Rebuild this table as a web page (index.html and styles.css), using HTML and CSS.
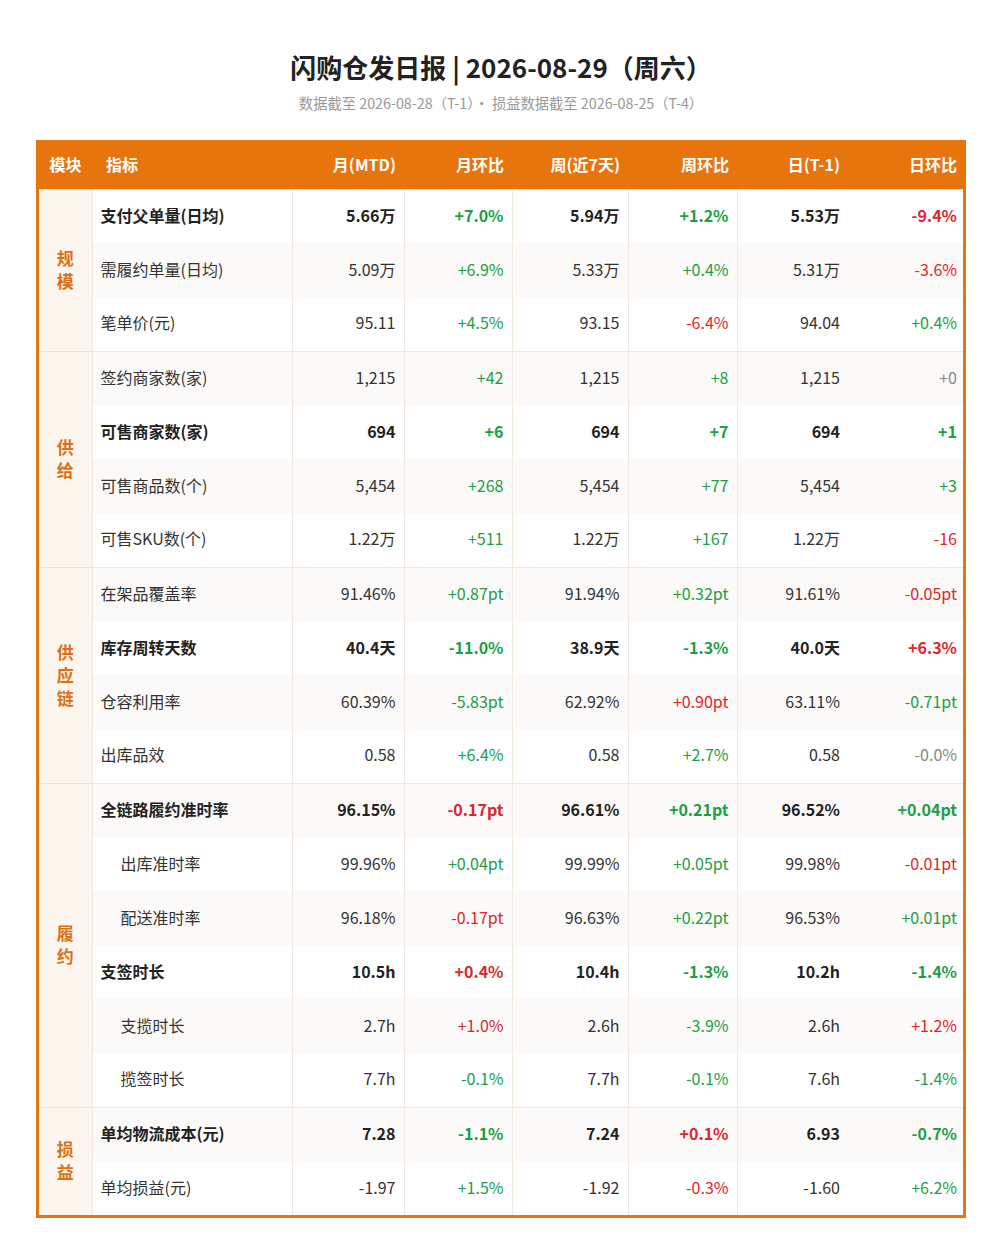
FILE: index.html
```html
<!DOCTYPE html>
<html lang="zh-CN">
<head>
<meta charset="utf-8">
<title>闪购仓发日报</title>
<link rel="stylesheet" href="styles.css">
</head>
<body>
<div class="page">
  <h1 class="title">闪购仓发日报 | 2026-08-29（周六）</h1>
  <p class="subtitle">数据截至 2026-08-28（T-1）· 损益数据截至 2026-08-25（T-4）</p>
  <div class="frame">
    <table class="report">
      <colgroup>
        <col class="c-mod"><col class="c-name"><col class="c-m"><col class="c-mc"><col class="c-w"><col class="c-wc"><col class="c-d"><col class="c-dc">
      </colgroup>
      <thead>
        <tr>
          <th class="h-mod">模块</th>
          <th class="h-name">指标</th>
          <th class="num">月(MTD)</th>
          <th class="num">月环比</th>
          <th class="num">周(近7天)</th>
          <th class="num">周环比</th>
          <th class="num">日(T-1)</th>
          <th class="num last">日环比</th>
        </tr>
      </thead>
      <tbody>
        <tr class="grp bold">
          <td class="mod" rowspan="3"><span>规</span><span>模</span></td>
          <td class="name">支付父单量(日均)</td>
          <td class="num">5.66万</td><td class="num g">+7.0%</td>
          <td class="num">5.94万</td><td class="num g">+1.2%</td>
          <td class="num">5.53万</td><td class="num last r">-9.4%</td>
        </tr>
        <tr>
          <td class="name">需履约单量(日均)</td>
          <td class="num">5.09万</td><td class="num g">+6.9%</td>
          <td class="num">5.33万</td><td class="num g">+0.4%</td>
          <td class="num">5.31万</td><td class="num last r">-3.6%</td>
        </tr>
        <tr>
          <td class="name">笔单价(元)</td>
          <td class="num">95.11</td><td class="num g">+4.5%</td>
          <td class="num">93.15</td><td class="num r">-6.4%</td>
          <td class="num">94.04</td><td class="num last g">+0.4%</td>
        </tr>

        <tr class="grp">
          <td class="mod" rowspan="4"><span>供</span><span>给</span></td>
          <td class="name">签约商家数(家)</td>
          <td class="num">1,215</td><td class="num g">+42</td>
          <td class="num">1,215</td><td class="num g">+8</td>
          <td class="num">1,215</td><td class="num last n">+0</td>
        </tr>
        <tr class="bold">
          <td class="name">可售商家数(家)</td>
          <td class="num">694</td><td class="num g">+6</td>
          <td class="num">694</td><td class="num g">+7</td>
          <td class="num">694</td><td class="num last g">+1</td>
        </tr>
        <tr>
          <td class="name">可售商品数(个)</td>
          <td class="num">5,454</td><td class="num g">+268</td>
          <td class="num">5,454</td><td class="num g">+77</td>
          <td class="num">5,454</td><td class="num last g">+3</td>
        </tr>
        <tr>
          <td class="name">可售SKU数(个)</td>
          <td class="num">1.22万</td><td class="num g">+511</td>
          <td class="num">1.22万</td><td class="num g">+167</td>
          <td class="num">1.22万</td><td class="num last r">-16</td>
        </tr>

        <tr class="grp">
          <td class="mod" rowspan="4"><span>供</span><span>应</span><span>链</span></td>
          <td class="name">在架品覆盖率</td>
          <td class="num">91.46%</td><td class="num g">+0.87pt</td>
          <td class="num">91.94%</td><td class="num g">+0.32pt</td>
          <td class="num">91.61%</td><td class="num last r">-0.05pt</td>
        </tr>
        <tr class="bold">
          <td class="name">库存周转天数</td>
          <td class="num">40.4天</td><td class="num g">-11.0%</td>
          <td class="num">38.9天</td><td class="num g">-1.3%</td>
          <td class="num">40.0天</td><td class="num last r">+6.3%</td>
        </tr>
        <tr>
          <td class="name">仓容利用率</td>
          <td class="num">60.39%</td><td class="num g">-5.83pt</td>
          <td class="num">62.92%</td><td class="num r">+0.90pt</td>
          <td class="num">63.11%</td><td class="num last g">-0.71pt</td>
        </tr>
        <tr>
          <td class="name">出库品效</td>
          <td class="num">0.58</td><td class="num g">+6.4%</td>
          <td class="num">0.58</td><td class="num g">+2.7%</td>
          <td class="num">0.58</td><td class="num last n">-0.0%</td>
        </tr>

        <tr class="grp bold">
          <td class="mod" rowspan="6"><span>履</span><span>约</span></td>
          <td class="name">全链路履约准时率</td>
          <td class="num">96.15%</td><td class="num r">-0.17pt</td>
          <td class="num">96.61%</td><td class="num g">+0.21pt</td>
          <td class="num">96.52%</td><td class="num last g">+0.04pt</td>
        </tr>
        <tr>
          <td class="name sub">出库准时率</td>
          <td class="num">99.96%</td><td class="num g">+0.04pt</td>
          <td class="num">99.99%</td><td class="num g">+0.05pt</td>
          <td class="num">99.98%</td><td class="num last r">-0.01pt</td>
        </tr>
        <tr>
          <td class="name sub">配送准时率</td>
          <td class="num">96.18%</td><td class="num r">-0.17pt</td>
          <td class="num">96.63%</td><td class="num g">+0.22pt</td>
          <td class="num">96.53%</td><td class="num last g">+0.01pt</td>
        </tr>
        <tr class="bold">
          <td class="name">支签时长</td>
          <td class="num">10.5h</td><td class="num r">+0.4%</td>
          <td class="num">10.4h</td><td class="num g">-1.3%</td>
          <td class="num">10.2h</td><td class="num last g">-1.4%</td>
        </tr>
        <tr>
          <td class="name sub">支揽时长</td>
          <td class="num">2.7h</td><td class="num r">+1.0%</td>
          <td class="num">2.6h</td><td class="num g">-3.9%</td>
          <td class="num">2.6h</td><td class="num last r">+1.2%</td>
        </tr>
        <tr>
          <td class="name sub">揽签时长</td>
          <td class="num">7.7h</td><td class="num g">-0.1%</td>
          <td class="num">7.7h</td><td class="num g">-0.1%</td>
          <td class="num">7.6h</td><td class="num last g">-1.4%</td>
        </tr>

        <tr class="grp bold">
          <td class="mod" rowspan="2"><span>损</span><span>益</span></td>
          <td class="name">单均物流成本(元)</td>
          <td class="num">7.28</td><td class="num g">-1.1%</td>
          <td class="num">7.24</td><td class="num r">+0.1%</td>
          <td class="num">6.93</td><td class="num last g">-0.7%</td>
        </tr>
        <tr>
          <td class="name">单均损益(元)</td>
          <td class="num">-1.97</td><td class="num g">+1.5%</td>
          <td class="num">-1.92</td><td class="num r">-0.3%</td>
          <td class="num">-1.60</td><td class="num last g">+6.2%</td>
        </tr>
      </tbody>
    </table>
  </div>
</div>
</body>
</html>
```

FILE: styles.css
```css
* { box-sizing: border-box; }

html, body {
  margin: 0;
  padding: 0;
  background: #ffffff;
}

body {
  font-family: "Noto Sans CJK SC", "Noto Sans", sans-serif;
  color: #333333;
}

.page {
  padding: 49px 34px 30px 36px;
}

.title {
  margin: 0;
  text-align: center;
  font-size: 26px;
  line-height: 36px;
  font-weight: 700;
  color: #222222;
}

.subtitle {
  margin: 8px 0 0;
  text-align: center;
  font-size: 14.3px;
  line-height: 20px;
  color: #999999;
}

.frame {
  margin-top: 27px;
  width: 930px;
  border: 3px solid #e8740d;
}

.report {
  width: 924px;
  border-collapse: collapse;
  table-layout: fixed;
  font-size: 16px;
}

.c-mod { width: 53px; }
.c-name { width: 200px; }
.c-m { width: 112px; }
.c-mc { width: 108px; }
.c-w { width: 116px; }
.c-wc { width: 109px; }
.c-d { width: 111px; }
.c-dc { width: 115px; }

.report th {
  background: #e8740d;
  color: #ffffff;
  font-weight: 700;
  font-size: 16px;
  height: 46px;
  padding: 0 8px 3px 8px;
  white-space: nowrap;
}

.report th.h-mod {
  text-align: center;
  padding: 0 0 3px 0;
}

.report th.h-name {
  text-align: left;
  padding-left: 14px;
}

.report th.num { text-align: right; }
.report th.last { padding-right: 6px; }

.report td {
  height: 54px;
  padding: 0 8px 3px 8px;
  border-left: 1px solid #f2e8de;
  white-space: nowrap;
  line-height: 22px;
}

.report td.last {
  border-left: none;
  padding-right: 6px;
}

.report tbody tr:nth-child(even) td {
  background: #fcfaf8;
}

.report tbody tr.grp td {
  border-top: 1px solid #f3e4d5;
}

.report td.mod {
  background: #fdf6ef !important;
  border-left: none;
  border-right: 1px solid #f2e8de;
  text-align: center;
  vertical-align: middle;
  padding: 0 0 2px 0;
  color: #e06e12;
  font-weight: 700;
  font-size: 17px;
}

.mod span {
  display: block;
  line-height: 23px;
}

.report td.name {
  text-align: left;
  padding-left: 8px;
  color: #333333;
}

.report td.sub {
  padding-left: 28px;
}

.report td.num {
  text-align: right;
  color: #333333;
}

.report tr.bold td.name,
.report tr.bold td.num {
  font-weight: 700;
  color: #222222;
}

.report td.num.g,
.report tr.bold td.num.g { color: #1a9f47; }

.report td.num.r,
.report tr.bold td.num.r { color: #e0252c; }

.report td.num.n,
.report tr.bold td.num.n { color: #888888; }
```
